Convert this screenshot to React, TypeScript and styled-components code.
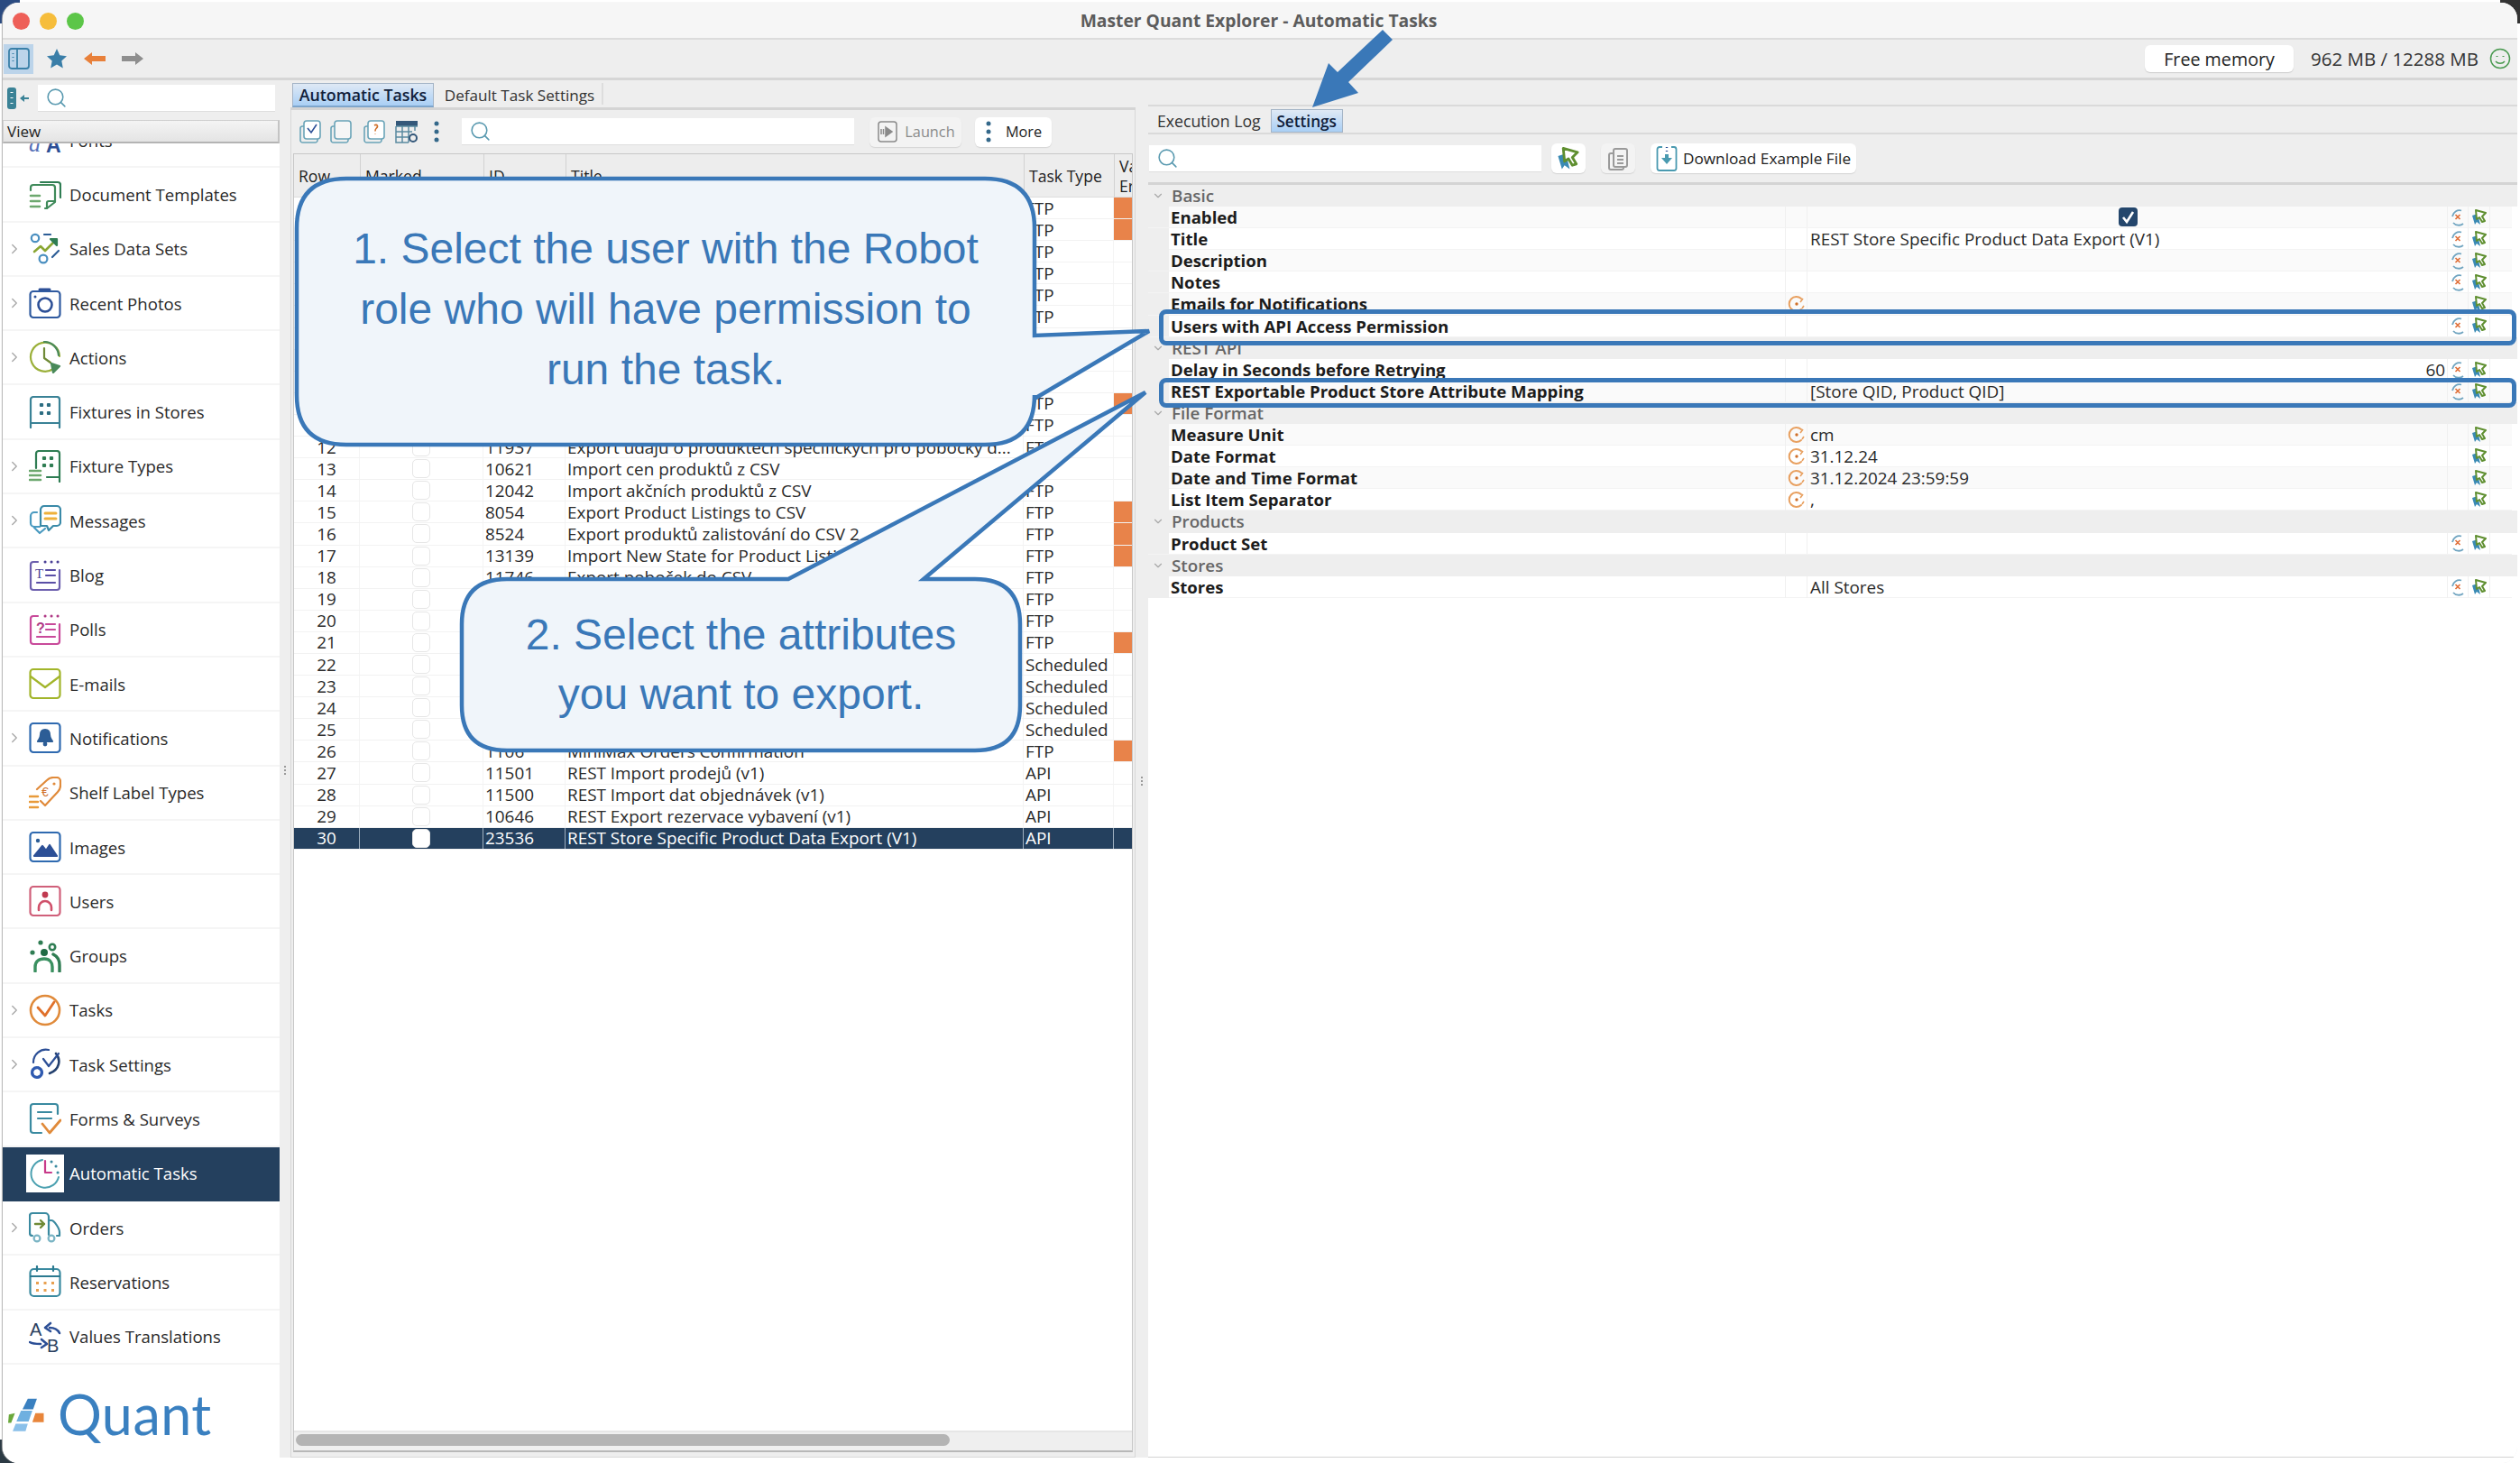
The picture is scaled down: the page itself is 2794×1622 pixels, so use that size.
import React from 'react'
import styled, { createGlobalStyle } from 'styled-components'
import { ChevronRight, ChevronDown, Search } from 'lucide-react'

const BLUE = '#3a78b8'
const UI_FONT = '"Open Sans", "Noto Sans", sans-serif'

const GlobalStyle = createGlobalStyle`
  html, body { margin: 0; padding: 0; background: #fff; }
  * { box-sizing: border-box; }
`

/* ---------- sidebar icons ---------- */

const Svg = ({ children }: { children: React.ReactNode }) => (
  <svg width='36' height='36' viewBox='0 0 36 36' fill='none' strokeWidth='2.2' strokeLinecap='round' strokeLinejoin='round'>
    {children}
  </svg>
)

const icons: Record<string, React.ReactNode> = {
  fonts: (
    <Svg>
      <text x='0' y='31' fontFamily='"Liberation Serif", serif' fontStyle='italic' fontSize='26' fill='#5570b8'>a</text>
      <text x='19' y='32' fontFamily='"Liberation Sans", sans-serif' fontWeight='700' fontSize='23' fill='#2c4f96'>A</text>
    </Svg>
  ),
  doc: (
    <Svg>
      <path d='M13 5h19a3 3 0 0 1 3 3v14' stroke='#2f7d53' />
      <path d='M2 14v-3a3 3 0 0 1 3-3h21a3 3 0 0 1 3 3v16l-9 7h-2' stroke='#3f8a5a' />
      <path d='M2 20h10M2 26h10M2 32h10' stroke='#6ca86e' strokeWidth='2.6' />
      <path d='M20 34v-6a2 2 0 0 1 2-2h6' stroke='#3f8a5a' />
    </Svg>
  ),
  sales: (
    <Svg>
      <circle cx='7' cy='6' r='4.2' stroke='#4a8fc0' />
      <circle cx='16' cy='29' r='4.4' stroke='#4a8fc0' />
      <path d='M17 2h7M26 27l7-7' stroke='#2c5d96' />
      <path d='M6 21l7-6 5 5 11-11' stroke='#8aa632' strokeWidth='2.6' />
      <path d='M24 7h7v7z' fill='#2f7d53' stroke='#2f7d53' />
    </Svg>
  ),
  camera: (
    <Svg>
      <path d='M12 3h11' stroke='#2c4f96' strokeWidth='3' />
      <rect x='1.5' y='5' width='33' height='29' rx='3.5' stroke='#2f5aa0' />
      <circle cx='18' cy='20' r='7.5' stroke='#2c4f96' strokeWidth='2.6' />
      <circle cx='7' cy='11' r='1.5' fill='#2c4f96' stroke='none' />
    </Svg>
  ),
  actions: (
    <Svg>
      <path d='M27 31a16 16 0 1 1 7-14' stroke='#9bb03a' />
      <path d='M17 8v11l7 5' stroke='#6f8a36' />
      <path d='M17 1a16 16 0 0 1 16 15' stroke='#4a8a5a' />
      <path d='M25 25l9 3-7 7z' fill='#4a8a5a' stroke='#4a8a5a' />
    </Svg>
  ),
  fixtures: (
    <Svg>
      <path d='M2 35V4a3 3 0 0 1 3-3h26a3 3 0 0 1 3 3v31M2 30h32' stroke='#3a8296' />
      <path d='M13 9h2v2h-2zM21 9h2v2h-2zM13 18h2v2h-2zM21 18h2v2h-2z' fill='#2c6d82' stroke='#2c6d82' />
    </Svg>
  ),
  fixtureTypes: (
    <Svg>
      <path d='M8 20V4a3 3 0 0 1 3-3h20a3 3 0 0 1 3 3v31M20 30h14' stroke='#2f7d53' />
      <path d='M16 8h2v2h-2zM24 8h2v2h-2zM16 16h2v2h-2zM24 16h2v2h-2z' fill='#2f7d53' stroke='#2f7d53' />
      <path d='M1 23h12M1 28h12M1 33h12' stroke='#6ca86e' strokeWidth='2.6' />
    </Svg>
  ),
  messages: (
    <Svg>
      <path d='M12 25H6a4 4 0 0 1-4-4v-8a4 4 0 0 1 4-4h3' stroke='#4a9ac0' />
      <path d='M6 26l6 6 6-5' stroke='#4a9ac0' />
      <path d='M13 24V6a4 4 0 0 1 4-4h14a4 4 0 0 1 4 4v14a4 4 0 0 1-4 4h-4l-5 5-2-5z' stroke='#3a8aa8' />
      <path d='M18 10h12M18 16h12' stroke='#eeb03a' strokeWidth='3' />
    </Svg>
  ),
  blog: (
    <Svg>
      <path d='M34 12v19a3 3 0 0 1-3 3H5a3 3 0 0 1-3-3V6a3 3 0 0 1 3-3h5' stroke='#6c5fae' />
      <path d='M18 3h.1M25 3h.1M32 3h.1' stroke='#4a3f96' strokeWidth='3' />
      <text x='7' y='21' fontFamily='"Liberation Serif", serif' fontSize='15' fill='#4a3f96'>T</text>
      <path d='M19 12h10M19 18h10M9 26h20' stroke='#5a4fa6' />
    </Svg>
  ),
  polls: (
    <Svg>
      <path d='M34 12v19a3 3 0 0 1-3 3H5a3 3 0 0 1-3-3V6a3 3 0 0 1 3-3h5' stroke='#c84a9a' />
      <path d='M18 3h.1M25 3h.1M32 3h.1' stroke='#b03a86' strokeWidth='3' />
      <text x='8' y='22' fontFamily='"Liberation Sans", sans-serif' fontWeight='700' fontSize='16' fill='#b03a86'>?</text>
      <path d='M19 12h10M19 18h10M9 26h20' stroke='#c84a9a' />
    </Svg>
  ),
  mail: (
    <Svg>
      <rect x='1.5' y='2' width='33' height='32' rx='3.5' stroke='#a2b52a' />
      <path d='M2 10l16 12 16-12' stroke='#a2b52a' />
    </Svg>
  ),
  bell: (
    <Svg>
      <rect x='1.5' y='2' width='33' height='32' rx='3.5' stroke='#2f6ab0' />
      <path d='M18 9c-4 0-5 3-5 6 0 4-2 5-3 7h16c-1-2-3-3-3-7 0-3-1-6-5-6z' fill='#2c5d96' stroke='#2c5d96' />
      <circle cx='18' cy='25' r='2.4' fill='#2c5d96' stroke='none' />
    </Svg>
  ),
  label: (
    <Svg>
      <path d='M9 14L20 4c2-2 4-3 7-3h4a4 4 0 0 1 4 4v5c0 3-1 5-3 7L18 32l-5-5' stroke='#e08a3a' />
      <circle cx='28' cy='8' r='1.6' fill='#e08a3a' stroke='none' />
      <text x='14' y='22' fontFamily='"Liberation Sans", sans-serif' fontSize='14' fill='#d0702a'>€</text>
      <path d='M1 22h9M1 28h9M1 34h9' stroke='#e89a3a' strokeWidth='2.6' />
    </Svg>
  ),
  images: (
    <Svg>
      <rect x='1.5' y='2' width='33' height='32' rx='3.5' stroke='#2f6ab0' />
      <circle cx='10' cy='11' r='2.2' fill='#2c5d96' stroke='none' />
      <path d='M6 28l9-11 4 5 4-6 8 12z' fill='#2c4f96' stroke='#2c4f96' />
    </Svg>
  ),
  users: (
    <Svg>
      <rect x='1.5' y='2' width='33' height='32' rx='3.5' stroke='#d0607a' />
      <circle cx='18' cy='11' r='3.4' fill='#c03a50' stroke='none' />
      <path d='M11 28v-3a7 7 0 0 1 14 0v3' stroke='#d0506a' strokeWidth='2.6' />
    </Svg>
  ),
  groups: (
    <Svg>
      <circle cx='13' cy='3' r='2.6' fill='#2f7d53' stroke='none' />
      <circle cx='4' cy='14' r='2.6' fill='#2f7d53' stroke='none' />
      <circle cx='17' cy='14' r='4' fill='#1f6a43' stroke='none' />
      <circle cx='26' cy='8' r='3.2' stroke='#2f7d53' strokeWidth='2.6' />
      <path d='M7 35v-5c0-6 4-9 10-9s9 4 9 9v5' stroke='#3a9060' strokeWidth='3.4' />
      <path d='M27 16c4 2 7 6 7 12v7' stroke='#2f7d53' strokeWidth='3.4' />
    </Svg>
  ),
  tasks: (
    <Svg>
      <circle cx='18' cy='18' r='16' stroke='#e08a3a' strokeWidth='2.6' />
      <path d='M10 15l8 9 10-15' stroke='#e0702a' strokeWidth='2.8' />
    </Svg>
  ),
  taskSettings: (
    <Svg>
      <path d='M5 16A14 14 0 0 1 22 2' stroke='#2c4f96' />
      <path d='M30 6c6 7 4 18-7 22' stroke='#24406e' strokeWidth='2.6' />
      <path d='M16 12l6 8 11-14' stroke='#2c4f96' />
      <circle cx='9' cy='27' r='5.4' stroke='#2f5ab0' strokeWidth='3.4' strokeDasharray='3 1.4' />
    </Svg>
  ),
  forms: (
    <Svg>
      <path d='M32 13V5a3 3 0 0 0-3-3H5a3 3 0 0 0-3 3v26a3 3 0 0 0 3 3h9' stroke='#3a8aa0' />
      <path d='M10 11h15M10 18h15' stroke='#3a8aa0' />
      <path d='M15 24l8 10 12-14' stroke='#e08a3a' strokeWidth='2.8' />
    </Svg>
  ),
  automatic: (
    <Svg>
      <path d='M15 3A15.5 15.5 0 1 0 33 22' stroke='#4aa0b0' strokeWidth='2' />
      <path d='M18 4v13h7' stroke='#c83a8a' />
      <path d='M25 5h.1M30 10h.1M32 17h.1' stroke='#3a8aa0' strokeWidth='3' />
    </Svg>
  ),
  orders: (
    <Svg>
      <path d='M4 27a3 3 0 0 1-3-3V5a3 3 0 0 1 3-3h14a4 4 0 0 1 4 4v20' stroke='#3a8aa0' />
      <path d='M22 10h3c3 0 9 9 9 13v4h-3' stroke='#3a8aa0' />
      <circle cx='9' cy='30' r='3.4' stroke='#7ab4c4' />
      <circle cx='25' cy='30' r='3.4' stroke='#7ab4c4' />
      <path d='M7 14h10M13 10l4 4-4 4' stroke='#6f8a36' strokeWidth='2.4' />
    </Svg>
  ),
  calendar: (
    <Svg>
      <rect x='1.5' y='4' width='33' height='30' rx='4' stroke='#3a8aa0' />
      <path d='M2 12h32M9 1v5M27 1v5' stroke='#2c7a90' />
      <path d='M8 18h3v3H8zM16.5 18h3v3h-3zM25 18h3v3h-3zM8 26h3v3H8zM16.5 26h3v3h-3zM25 26h3v3h-3z' fill='#e8a050' stroke='none' />
    </Svg>
  ),
  translate: (
    <Svg>
      <text x='1' y='17' fontFamily='"Liberation Sans", sans-serif' fontSize='20' fill='#2a3f60'>A</text>
      <text x='20' y='35' fontFamily='"Liberation Sans", sans-serif' fontSize='20' fill='#2a3f60'>B</text>
      <path d='M34 14c-2-4-6-6-11-6M24 3l-6 5 6 4' stroke='#2c4f96' strokeWidth='2.6' />
      <path d='M1 24c3 2 6 2 12 2M14 21l6 5-6 4' stroke='#2c4f96' strokeWidth='2.6' />
    </Svg>
  )
}

type NavItem = { key: string; label: string; expandable?: boolean; active?: boolean }

const navItems: NavItem[] = [
  { key: 'fonts', label: 'Fonts' },
  { key: 'doc', label: 'Document Templates' },
  { key: 'sales', label: 'Sales Data Sets', expandable: true },
  { key: 'camera', label: 'Recent Photos', expandable: true },
  { key: 'actions', label: 'Actions', expandable: true },
  { key: 'fixtures', label: 'Fixtures in Stores' },
  { key: 'fixtureTypes', label: 'Fixture Types', expandable: true },
  { key: 'messages', label: 'Messages', expandable: true },
  { key: 'blog', label: 'Blog' },
  { key: 'polls', label: 'Polls' },
  { key: 'mail', label: 'E-mails' },
  { key: 'bell', label: 'Notifications', expandable: true },
  { key: 'label', label: 'Shelf Label Types' },
  { key: 'images', label: 'Images' },
  { key: 'users', label: 'Users' },
  { key: 'groups', label: 'Groups' },
  { key: 'tasks', label: 'Tasks', expandable: true },
  { key: 'taskSettings', label: 'Task Settings', expandable: true },
  { key: 'forms', label: 'Forms & Surveys' },
  { key: 'automatic', label: 'Automatic Tasks', active: true },
  { key: 'orders', label: 'Orders', expandable: true },
  { key: 'calendar', label: 'Reservations' },
  { key: 'translate', label: 'Values Translations' }
]

/* ---------- data ---------- */

type TaskRow = { id?: string; title?: string; type?: string; flagged?: boolean }

const taskRows: TaskRow[] = [
  { type: 'FTP', flagged: true },
  { type: 'FTP', flagged: true },
  { type: 'FTP' },
  { type: 'FTP' },
  { type: 'FTP' },
  { type: 'FTP' },
  {},
  {},
  {},
  { type: 'FTP', flagged: true },
  { type: 'FTP' },
  { id: '11937', title: 'Export údajů o produktech specifických pro pobočky d...', type: 'FTP' },
  { id: '10621', title: 'Import cen produktů z CSV' },
  { id: '12042', title: 'Import akčních produktů z CSV', type: 'FTP' },
  { id: '8054', title: 'Export Product Listings to CSV', type: 'FTP', flagged: true },
  { id: '8524', title: 'Export produktů zalistování do CSV 2', type: 'FTP', flagged: true },
  { id: '13139', title: 'Import New State for Product Listings', type: 'FTP', flagged: true },
  { id: '11746', title: 'Export poboček do CSV', type: 'FTP' },
  { type: 'FTP' },
  { type: 'FTP' },
  { type: 'FTP', flagged: true },
  { type: 'Scheduled' },
  { type: 'Scheduled' },
  { type: 'Scheduled' },
  { type: 'Scheduled' },
  { id: '1106', title: 'MiniMax Orders Confirmation', type: 'FTP', flagged: true },
  { id: '11501', title: 'REST Import prodejů (v1)', type: 'API' },
  { id: '11500', title: 'REST Import dat objednávek (v1)', type: 'API' },
  { id: '10646', title: 'REST Export rezervace vybavení (v1)', type: 'API' },
  { id: '23536', title: 'REST Store Specific Product Data Export (V1)', type: 'API' }
]

type PropRow = {
  label: string
  group?: boolean
  value?: string
  alignEnd?: boolean
  inherited?: boolean
  reset?: boolean
  checked?: boolean
}

const propRows: PropRow[] = [
  { label: 'Basic', group: true },
  { label: 'Enabled', checked: true, reset: true },
  { label: 'Title', value: 'REST Store Specific Product Data Export (V1)', reset: true },
  { label: 'Description', reset: true },
  { label: 'Notes', reset: true },
  { label: 'Emails for Notifications', inherited: true },
  { label: 'Users with API Access Permission', reset: true },
  { label: 'REST API', group: true },
  { label: 'Delay in Seconds before Retrying', value: '60', alignEnd: true, reset: true },
  { label: 'REST Exportable Product Store Attribute Mapping', value: '[Store QID, Product QID]', reset: true },
  { label: 'File Format', group: true },
  { label: 'Measure Unit', value: 'cm', inherited: true },
  { label: 'Date Format', value: '31.12.24', inherited: true },
  { label: 'Date and Time Format', value: '31.12.2024 23:59:59', inherited: true },
  { label: 'List Item Separator', value: ',', inherited: true },
  { label: 'Products', group: true },
  { label: 'Product Set', reset: true },
  { label: 'Stores', group: true },
  { label: 'Stores', value: 'All Stores', reset: true }
]

/* ---------- small drawings ---------- */

const PinIcon = ({ size = 18 }: { size?: number }) => (
  <svg width={size} height={size} viewBox='0 0 18 18'>
    <path d='M1 7l6-2 3 12-4-3-2 3z' fill='#3a8ab4' />
    <path d='M5 1l11 3-4 4 3 5-3 1-3-5-3 2z' fill='#fff' stroke='#5f8f30' strokeWidth='2' strokeLinejoin='round' />
  </svg>
)

const ResetIcon = () => (
  <svg width='18' height='22' viewBox='0 0 18 22' fill='none'>
    <path d='M13 3.500A8 8 0 0 0 3 10' stroke='#6fa4c0' strokeWidth='1.800' />
    <path d='M4 17a8 8 0 0 0 11 1' stroke='#6fa4c0' strokeWidth='1.800' />
    <path d='M6.500 8l5 5M11.500 8l-5 5' stroke='#e0703a' strokeWidth='1.700' />
  </svg>
)

const InheritedIcon = () => (
  <svg width='20' height='22' viewBox='0 0 20 22' fill='none'>
    <path d='M15 5a8 8 0 1 0 0 12' stroke='#e8a060' strokeWidth='2' strokeLinecap='round' />
    <path d='M14 9l3-4M16 16l2-3' stroke='#e8a060' strokeWidth='1.600' />
    <circle cx='10' cy='11' r='1.700' fill='#d0702a' />
  </svg>
)

const TabletIcon = ({ mark }: { mark: 'check' | 'none' | 'help' }) => (
  <svg width='26' height='28' viewBox='0 0 26 28' fill='none' stroke='#6aa4b8' strokeWidth='1.600'>
    <rect x='6' y='2' width='18' height='20' rx='3' fill={mark === 'none' ? '#f6f6f6' : '#fff'} />
    <path d='M6 8H4a2.500 2.500 0 0 0-2 2.500v13A2.500 2.500 0 0 0 4.500 26h14a2.500 2.500 0 0 0 2.500-2.500V22' />
    {mark === 'check' && <path d='M10 10l4 5 6-9' stroke='#2c4f96' />}
    {mark === 'help' && <path d='M13 7c3-2 5 1 2 3.500-1 .8-1 1.500-1 3M14 16.500v.5' stroke='#d0702a' />}
  </svg>
)

const TableIcon = () => (
  <svg width='26' height='28' viewBox='0 0 26 28' fill='none'>
    <rect x='1' y='2' width='24' height='6' fill='#34587a' />
    <path d='M1 8h24M1 14h18M1 20h14M8 8v18M15 8v18M1 8v18h14M22 8v5' stroke='#5a8aa0' strokeWidth='1.500' />
    <circle cx='20' cy='21' r='4' stroke='#34587a' strokeWidth='2' />
  </svg>
)

const Kebab = ({ color }: { color: string }) => (
  <svg width='8' height='26' viewBox='0 0 8 26'>
    <circle cx='4' cy='4' r='2.500' fill={color} />
    <circle cx='4' cy='13' r='2.500' fill={color} />
    <circle cx='4' cy='22' r='2.500' fill={color} />
  </svg>
)

/* ---------- layout ---------- */

const Page = styled.div`
  position: relative;
  width: 2794px;
  height: 1622px;
  overflow: hidden;
  background: #fff;
  font-family: ${UI_FONT};
  color: #222;
`
const Corner = styled.div<{ $left?: number; $right?: number; $top?: number; $bottom?: number; $color: string }>`
  position: absolute;
  width: 22px;
  height: 26px;
  ${(p) => (p.$left !== undefined ? `left: ${p.$left}px;` : '')}
  ${(p) => (p.$right !== undefined ? `right: ${p.$right}px;` : '')}
  ${(p) => (p.$top !== undefined ? `top: ${p.$top}px;` : '')}
  ${(p) => (p.$bottom !== undefined ? `bottom: ${p.$bottom}px;` : '')}
  background: ${(p) => p.$color};
`
const Window = styled.div`
  position: relative;
  display: flex;
  flex-direction: column;
  height: 1619px;
  margin: 3px 3px 0 3px;
  background: #fff;
  border-radius: 18px;
  overflow: hidden;
  box-shadow: -1px 0 1px #b4b4b4;
`
const TitleBar = styled.div`
  position: relative;
  display: flex;
  flex: 0 0 41px;
  align-items: center;
  justify-content: center;
  background: #f6f6f6;
  border-bottom: 2px solid #dcdcdc;
`
const Lights = styled.div`
  position: absolute;
  left: 11px;
  top: 11px;
  display: flex;
  gap: 11px;
`
const Light = styled.span<{ $color: string }>`
  width: 19px;
  height: 19px;
  border-radius: 50%;
  background: ${(p) => p.$color};
`
const WindowTitle = styled.div`
  font-size: 19.300px;
  font-weight: 700;
  color: #5c5c5c;
  margin-right: 3px;
`
const ToolBar = styled.div`
  display: flex;
  flex: 0 0 45px;
  align-items: center;
  justify-content: space-between;
  padding: 0 7px 0 1px;
  background: #eee;
  border-bottom: 3px solid #d6d6d6;
`
const ToolGroup = styled.div`
  display: flex;
  align-items: center;
`
const ToggleButton = styled.div`
  display: flex;
  align-items: center;
  justify-content: center;
  width: 33px;
  height: 33px;
  background: #bcd4ea;
  margin-right: 14px;
`
const ToolIcon = styled.div`
  display: flex;
  margin-right: 18px;
`
const MemoryButton = styled.div`
  display: flex;
  align-items: center;
  justify-content: center;
  width: 165px;
  height: 30px;
  background: #fff;
  border-radius: 6px;
  box-shadow: 0 1px 1px #ccc;
  font-size: 19.700px;
  margin-right: 19px;
`
const MemoryText = styled.div`
  font-size: 20.500px;
  margin-right: 12px;
  color: #333;
`
const Main = styled.div`
  display: flex;
  flex: 1;
  min-height: 0;
  background: #fff;
`

/* sidebar */

const Sidebar = styled.aside`
  display: flex;
  flex: 0 0 307px;
  flex-direction: column;
  background: #fff;
`
const SideSearchRow = styled.div`
  display: flex;
  flex: 0 0 44px;
  align-items: center;
  gap: 10px;
  padding: 0 5px 4px 5px;
  background: #eee;
`
const SearchField = styled.div<{ $width?: number }>`
  display: flex;
  align-items: center;
  flex: ${(p) => (p.$width ? `0 0 ${p.$width}px` : '1')};
  height: 30px;
  padding-left: 8px;
  background: #fff;
  border-bottom: 1px solid #dedede;
  color: #5a9ab0;
`
const ViewHeader = styled.div`
  display: flex;
  flex: 0 0 25px;
  align-items: center;
  padding-left: 4px;
  font-size: 17px;
  background: linear-gradient(#f4f4f4, #e4e4e4);
  border: 1px solid #cfcfcf;
  border-bottom: 2px solid #b4b4b4;
  border-right: 2px solid #c4c4c4;
`
const NavList = styled.div`
  flex: 0 0 1357px;
  overflow: hidden;
`
const NavInner = styled.div`
  margin-top: -33px;
`
const NavRow = styled.div<{ $active?: boolean }>`
  position: relative;
  display: flex;
  align-items: center;
  height: 60.3px;
  padding-left: 29px;
  gap: 9px;
  font-size: 18.600px;
  color: ${(p) => (p.$active ? '#fff' : '#2a2a2a')};
  background: ${(p) => (p.$active ? '#24405e' : '#fff')};
  border-bottom: 2px solid ${(p) => (p.$active ? '#24405e' : '#f5f5f5')};
`
const NavChevron = styled.span`
  position: absolute;
  left: 4px;
  top: 50%;
  margin-top: -9px;
  display: flex;
  color: #a8a8a8;
`
const NavIcon = styled.span<{ $active?: boolean }>`
  display: flex;
  align-items: center;
  justify-content: center;
  width: 36px;
  height: 36px;
  ${(p) => p.$active && 'background: #fff; box-shadow: 0 0 0 3px #fff;'}
`
const LogoArea = styled.div`
  display: flex;
  flex: 1;
  align-items: flex-start;
  gap: 12px;
  padding: 16px 0 0 5px;
`
const LogoWord = styled.div`
  font-family: Lato, "Open Sans", sans-serif;
  font-weight: 400;
  font-size: 61px;
  line-height: 72px;
  color: #3a80c0;
  letter-spacing: 0.5px;
`
const LogoMark = styled.div`
  display: flex;
  padding-top: 17px;
`

/* splitters */

const Splitter = styled.div<{ $width: number; $gripTop: number }>`
  flex: 0 0 ${(p) => p.$width}px;
  padding-top: ${(p) => p.$gripTop}px;
  margin-bottom: 6px;
  display: flex;
  justify-content: center;
  background: #eee;
`
const Grip = styled.div`
  width: 2px;
  height: 10px;
  background: repeating-linear-gradient(#999 0 2px, transparent 2px 4px);
`

/* center panel */

const CenterPanel = styled.section`
  display: flex;
  flex: 0 0 936px;
  flex-direction: column;
  margin-bottom: 6px;
  background: #eee;
`
const TabStrip = styled.div<{ $pad?: number }>`
  display: flex;
  flex: 0 0 33px;
  align-items: flex-end;
  padding-left: ${(p) => p.$pad || 0}px;
  border-bottom: 3px solid #d4d4d4;
`
const Tab = styled.div<{ $selected?: boolean; $width: number }>`
  display: flex;
  align-items: center;
  justify-content: center;
  width: ${(p) => p.$width}px;
  height: 27px;
  padding-left: ${(p) => (p.$selected ? 0 : 4)}px;
  font-size: ${(p) => (p.$selected ? 17.800 : 17.100)}px;
  font-weight: ${(p) => (p.$selected ? 600 : 400)};
  color: ${(p) => (p.$selected ? '#10203a' : '#333')};
  background: ${(p) => (p.$selected ? 'linear-gradient(#dfe9f5, #a9cff5)' : 'transparent')};
  border: ${(p) => (p.$selected ? '1px solid #a4b4c6' : 'none')};
  border-bottom: ${(p) => (p.$selected ? '2px solid #7ea6cc' : 'none')};
`
const TabGap = styled.div`
  height: 24px;
  width: 2px;
  background: #ddd;
  align-self: center;
`
const CenterBody = styled.div`
  display: flex;
  flex: 1;
  flex-direction: column;
  min-height: 0;
  padding: 0 2px 5px;
  border: 1px solid #d8d8d8;
  border-top: none;
`
const PanelToolbar = styled.div`
  display: flex;
  flex: 0 0 48px;
  align-items: center;
  padding-left: 6px;
`
const IconSlot = styled.div<{ $gap: number }>`
  display: flex;
  margin-right: ${(p) => p.$gap}px;
`
const ActionButton = styled.div<{ $disabled?: boolean; $width: number; $gap: number }>`
  display: flex;
  align-items: center;
  justify-content: center;
  gap: ${(p) => p.$gap}px;
  width: ${(p) => p.$width}px;
  height: 33px;
  margin-right: 15px;
  font-size: 16.300px;
  color: ${(p) => (p.$disabled ? '#8a8a8a' : '#222')};
  background: ${(p) => (p.$disabled ? '#f3f3f3' : '#fff')};
  border-radius: 6px;
  box-shadow: 0 1px 1px #d4d4d4;
`
const TableBox = styled.div`
  display: flex;
  flex: 1;
  flex-direction: column;
  min-height: 0;
  background: #fff;
  border: 1px solid #c8c8c8;
  border-bottom: 2px solid #b8b8b8;
`
const gridColumns = '73px 137px 91px 508px 100px 20px'
const HeaderRow = styled.div`
  display: grid;
  flex: 0 0 48px;
  grid-template-columns: ${gridColumns};
  background: #ededed;
  border-bottom: 1px solid #ddd;
`
const HeaderCell = styled.div`
  display: flex;
  align-items: center;
  padding-left: 5px;
  font-size: 17.600px;
  line-height: 22px;
  overflow: hidden;
  border-left: 1px solid #d2d2d2;
  &:first-child { border-left: none; }
`
const Rows = styled.div`
  flex: 1;
`
const Row = styled.div<{ $selected?: boolean }>`
  display: grid;
  height: 24.1px;
  grid-template-columns: ${gridColumns};
  font-size: 18.900px;
  line-height: 24px;
  white-space: nowrap;
  color: ${(p) => (p.$selected ? '#fff' : '#2a2a2a')};
  background: ${(p) => (p.$selected ? '#24405e' : '#fff')};
  border-bottom: 1px solid #f2f2f2;
`
const Cell = styled.div<{ $center?: boolean; $selected?: boolean; $pad?: number }>`
  display: flex;
  align-items: center;
  justify-content: ${(p) => (p.$center ? 'center' : 'flex-start')};
  padding-left: ${(p) => p.$pad ?? 2}px;
  overflow: hidden;
  border-right: 1px solid ${(p) => (p.$selected ? '#9fb0c0' : '#f4f4f4')};
`
const Flag = styled.div<{ $on?: boolean }>`
  background: ${(p) => (p.$on ? '#e8834a' : 'transparent')};
`
const RowCheck = styled.span`
  width: 20px;
  height: 21px;
  border-radius: 5px;
  background: #fff;
  border: 1px solid #e6e6e6;
`
const ScrollTrack = styled.div`
  display: flex;
  flex: 0 0 22px;
  align-items: center;
  padding: 0 0 3px 2px;
  background: #efefef;
  border-top: 2px solid #e6e6e6;
`
const ScrollThumb = styled.div`
  width: 725px;
  height: 13px;
  border-radius: 7px;
  background: #b4b4b4;
`

/* right panel */

const RightPanel = styled.section`
  display: flex;
  flex: 0 0 1518px;
  flex-direction: column;
  margin-bottom: 6px;
  background: #eee;
  border-bottom: 1px solid #d4d4d4;
`
const RightTopBand = styled.div`
  flex: 0 0 29px;
  border-bottom: 2px solid #dadada;
`
const RightTabs = styled.div`
  display: flex;
  flex: 0 0 31px;
  align-items: flex-end;
  padding-left: 5px;
  gap: 6px;
  border-bottom: 2px solid #dadada;
`
const RightTab = styled.div<{ $selected?: boolean }>`
  display: flex;
  align-items: center;
  justify-content: center;
  height: 26px;
  padding: 0 5px;
  font-size: ${(p) => (p.$selected ? 17.200 : 17.700)}px;
  font-weight: ${(p) => (p.$selected ? 600 : 400)};
  color: ${(p) => (p.$selected ? '#10203a' : '#333')};
  width: ${(p) => (p.$selected ? '80px' : 'auto')};
  background: ${(p) => (p.$selected ? 'linear-gradient(#dfe9f5, #a9cff5)' : 'transparent')};
  border: ${(p) => (p.$selected ? '1px solid #a4b4c6' : 'none')};
`
const RightToolbar = styled.div`
  display: flex;
  flex: 0 0 56px;
  align-items: center;
  padding: 0 0 0 1px;
  border-bottom: 3px solid #d4d4d4;
`
const IconButton = styled.div<{ $muted?: boolean; $width?: number }>`
  display: flex;
  align-items: center;
  justify-content: center;
  gap: 6px;
  width: ${(p) => p.$width || 38}px;
  height: 33px;
  margin-right: 17px;
  font-size: 17.200px;
  white-space: nowrap;
  background: ${(p) => (p.$muted ? '#f3f3f3' : '#fff')};
  border-radius: 6px;
  box-shadow: 0 1px 1px #d4d4d4;
`
const PropGrid = styled.div`
  flex: 1;
  background: #fff;
`
const propColumns = '23px 683px 24px 710px 23px 24px 25px'
const GroupRow = styled.div`
  display: flex;
  align-items: center;
  height: 24.1px;
  background: #eee;
  font-size: 18.800px;
  font-weight: 600;
  color: #666;
  gap: 8px;
  padding-left: 4px;
`
const PropRowBox = styled.div<{ $odd: boolean }>`
  display: grid;
  height: 24.1px;
  grid-template-columns: ${propColumns};
  width: 1512px;
  font-size: 18.900px;
  line-height: 24px;
  white-space: nowrap;
  background: ${(p) => (p.$odd ? '#fafafa' : '#fff')};
  border-bottom: 1px solid #f3f3f3;
`
const Gutter = styled.div`
  background: #eee;
`
const PropLabel = styled.div`
  padding-left: 2px;
  font-weight: 700;
  font-size: 18.600px;
  color: #1c1c1c;
  overflow: hidden;
`
const PropIconCell = styled.div`
  display: flex;
  align-items: center;
  justify-content: center;
  overflow: hidden;
  border-left: 1px solid #f0f0f0;
`
const PropValue = styled.div<{ $end?: boolean; $center?: boolean }>`
  display: flex;
  align-items: center;
  justify-content: ${(p) => (p.$end ? 'flex-end' : p.$center ? 'center' : 'flex-start')};
  padding: 0 2px 0 3px;
  border-left: 1px solid #f0f0f0;
  color: #2a2a2a;
`
const CheckBox = styled.span`
  display: flex;
  align-items: center;
  justify-content: center;
  width: 21px;
  height: 21px;
  border-radius: 4px;
  background: #24466c;
`

/* annotations lying over the screenshot */

const AnnotationLayer = styled.svg`
  position: absolute;
  left: 0;
  top: 0;
  pointer-events: none;
`
const CalloutText = styled.div<{ $left: number; $top: number; $width: number; $line: number }>`
  position: absolute;
  left: ${(p) => p.$left}px;
  top: ${(p) => p.$top}px;
  width: ${(p) => p.$width}px;
  font-family: "Liberation Sans", Arial, sans-serif;
  font-size: 48px;
  line-height: ${(p) => p.$line}px;
  color: ${BLUE};
  text-align: center;
`
const Highlight = styled.div<{ $top: number; $height: number }>`
  position: absolute;
  left: 1285px;
  top: ${(p) => p.$top}px;
  width: 1505px;
  height: ${(p) => p.$height}px;
  border: 5px solid ${BLUE};
  border-radius: 8px;
`

const QuantMark = () => (
  <svg width='44' height='42' viewBox='0 0 52 50'>
    <path d='M2 23l8-2-5 13H1z' fill='#6aa83c' />
    <path d='M27 2h12l-5 14H20z' fill='#3a80c0' />
    <path d='M18 18h15l-5 14H12z' fill='#6fb0e0' />
    <path d='M37 21h11v12H33z' fill='#e8853a' />
    <path d='M11 35h16l-3 10H7z' fill='#8ac0ea' />
  </svg>
)

export default function App() {
  return (
    <Page>
      <GlobalStyle />
      <Corner $left={0} $top={0} $color='#2a4a80' />
      <Corner $right={0} $top={0} $color='#333' />
      <Corner $left={0} $bottom={0} $color='#2c3a44' />
      <Window>
        <TitleBar>
          <Lights>
            <Light $color='#ee5f58' />
            <Light $color='#f6bd3b' />
            <Light $color='#5cc648' />
          </Lights>
          <WindowTitle>Master Quant Explorer - Automatic Tasks</WindowTitle>
        </TitleBar>

        <ToolBar>
          <ToolGroup>
            <ToggleButton>
              <svg width='24' height='24' viewBox='0 0 24 24' fill='none' stroke='#3a80a8' strokeWidth='1.800'>
                <rect x='1' y='1' width='22' height='22' rx='3' />
                <path d='M10 1v22' />
                <path d='M5.500 6v1M5.500 10v1M5.500 14v1' strokeWidth='2' />
              </svg>
            </ToggleButton>
            <ToolIcon>
              <svg width='24' height='24' viewBox='0 0 24 24'>
                <path d='M12 1l3.300 7.300 7.700.9-5.700 5.300 1.500 7.900L12 18.500 5.200 22.400l1.500-7.900L1 9.200l7.700-.9z' fill='#3a7ea8' />
              </svg>
            </ToolIcon>
            <ToolIcon>
              <svg width='24' height='16' viewBox='0 0 24 16'>
                <path d='M0 8l9-7v4h15v6H9v4z' fill='#e8803a' />
              </svg>
            </ToolIcon>
            <ToolIcon>
              <svg width='24' height='16' viewBox='0 0 24 16'>
                <path d='M24 8l-9-7v4H0v6h15v4z' fill='#8e8e8e' />
              </svg>
            </ToolIcon>
          </ToolGroup>
          <ToolGroup>
            <MemoryButton>Free memory</MemoryButton>
            <MemoryText>962 MB / 12288 MB</MemoryText>
            <svg width='24' height='24' viewBox='0 0 24 24' fill='none' stroke='#4a9a50' strokeWidth='1.500'>
              <circle cx='12' cy='12' r='10.500' />
              <path d='M8.500 9v1M15.500 9v1' strokeWidth='2' />
              <path d='M7 15c2.500 3 7.500 3 10 0' />
            </svg>
          </ToolGroup>
        </ToolBar>

        <Main>
          <Sidebar>
            <SideSearchRow>
              <svg width='24' height='28' viewBox='0 0 24 28'>
                <rect x='0' y='2' width='10' height='24' rx='3' fill='#3a8296' />
                <path d='M5 7v1M5 13v1M5 19v1' stroke='#fff' strokeWidth='3' />
                <path d='M14 14l5-4v3h5v2h-5v3z' fill='#3a8296' />
              </svg>
              <SearchField>
                <Search size={25} strokeWidth={1.500} />
              </SearchField>
            </SideSearchRow>
            <ViewHeader>View</ViewHeader>
            <NavList>
              <NavInner>
                {navItems.map((item) => (
                  <NavRow key={item.key} $active={item.active}>
                    {item.expandable && (
                      <NavChevron>
                        <ChevronRight size={18} strokeWidth={1.800} />
                      </NavChevron>
                    )}
                    <NavIcon $active={item.active}>{icons[item.key]}</NavIcon>
                    {item.label}
                  </NavRow>
                ))}
              </NavInner>
            </NavList>
            <LogoArea>
              <LogoMark>
                <QuantMark />
              </LogoMark>
              <LogoWord>Quant</LogoWord>
            </LogoArea>
          </Sidebar>

          <Splitter $width={12} $gripTop={760}>
            <Grip />
          </Splitter>

          <CenterPanel>
            <TabStrip $pad={2}>
              <Tab $selected $width={157}>Automatic Tasks</Tab>
              <Tab $width={186}>Default Task Settings</Tab>
              <TabGap />
            </TabStrip>
            <CenterBody>
              <PanelToolbar>
                <IconSlot $gap={8}><TabletIcon mark='check' /></IconSlot>
                <IconSlot $gap={11}><TabletIcon mark='none' /></IconSlot>
                <IconSlot $gap={10}><TabletIcon mark='help' /></IconSlot>
                <IconSlot $gap={16}><TableIcon /></IconSlot>
                <IconSlot $gap={24}><Kebab color='#34688a' /></IconSlot>
                <SearchField $width={435}>
                  <Search size={25} strokeWidth={1.500} />
                </SearchField>
                <IconSlot $gap={17} />
                <ActionButton $disabled $width={102} $gap={6}>
                  <svg width='26' height='26' viewBox='0 0 26 26' fill='none' stroke='#8a8a8a' strokeWidth='1.500'>
                    <rect x='3' y='2' width='20' height='22' rx='3' />
                    <path d='M11 8l7 5-7 5z' fill='#8a8a8a' />
                    <path d='M6 10v6M8.500 10v6' />
                  </svg>
                  Launch
                </ActionButton>
                <ActionButton $width={85} $gap={15}>
                  <Kebab color='#34688a' />
                  <span>More</span>
                </ActionButton>
              </PanelToolbar>
              <TableBox>
                <HeaderRow>
                  <HeaderCell>Row</HeaderCell>
                  <HeaderCell>Marked</HeaderCell>
                  <HeaderCell>ID</HeaderCell>
                  <HeaderCell>Title</HeaderCell>
                  <HeaderCell>Task Type</HeaderCell>
                  <HeaderCell>Va<br />Er</HeaderCell>
                </HeaderRow>
                <Rows>
                  {taskRows.map((row, index) => {
                    const selected = index === taskRows.length - 1
                    return (
                      <Row key={index} $selected={selected}>
                        <Cell $center $pad={0} $selected={selected}>{index + 1}</Cell>
                        <Cell $center $pad={0} $selected={selected}><RowCheck /></Cell>
                        <Cell $selected={selected}>{row.id}</Cell>
                        <Cell $selected={selected}>{row.title}</Cell>
                        <Cell $selected={selected}>{row.type}</Cell>
                        <Flag $on={row.flagged} />
                      </Row>
                    )
                  })}
                </Rows>
                <ScrollTrack>
                  <ScrollThumb />
                </ScrollTrack>
              </TableBox>
            </CenterBody>
          </CenterPanel>

          <Splitter $width={14} $gripTop={772}>
            <Grip />
          </Splitter>

          <RightPanel>
            <RightTopBand />
            <RightTabs>
              <RightTab>Execution Log</RightTab>
              <RightTab $selected>Settings</RightTab>
            </RightTabs>
            <RightToolbar>
              <SearchField $width={435}>
                <Search size={25} strokeWidth={1.500} />
              </SearchField>
              <IconSlot $gap={11} />
              <IconButton><PinIcon size={26} /></IconButton>
              <IconButton $muted>
                <svg width='24' height='28' viewBox='0 0 24 28' fill='none' stroke='#9a9a9a' strokeWidth='2'>
                  <rect x='7' y='3' width='15' height='20' rx='2' />
                  <path d='M7 8H4a2 2 0 0 0-2 2v14a2 2 0 0 0 2 2h12a2 2 0 0 0 2-2v-1M11 11h7M11 15h7M11 19h7' />
                </svg>
              </IconButton>
              <IconButton $width={228}>
                <svg width='24' height='30' viewBox='0 0 24 30' fill='none' stroke='#4a9ab0' strokeWidth='1.800'>
                  <path d='M7 2H4a2.500 2.500 0 0 0-2.500 2.500v21A2.500 2.500 0 0 0 4 28h16a2.500 2.500 0 0 0 2.500-2.500v-21A2.500 2.500 0 0 0 20 2h-3' />
                  <path d='M12 2v1M12 6v1' stroke='#2c4f96' strokeWidth='2.400' />
                  <path d='M12 21l-6-7h12z' fill='#4a9ab0' stroke='none' />
                  <path d='M10 10h4v5h-4z' fill='#4a9ab0' stroke='none' />
                </svg>
                Download Example File
              </IconButton>
            </RightToolbar>
            <PropGrid>
              {propRows.map((row, index) => {
                if (row.group) {
                  return (
                    <GroupRow key={index}>
                      <ChevronDown size={14} color='#a8a8a8' />
                      {row.label}
                    </GroupRow>
                  )
                }
                return (
                  <PropRowBox key={index} $odd={index % 2 === 1}>
                    <Gutter />
                    <PropLabel>{row.label}</PropLabel>
                    <PropIconCell>{row.inherited && <InheritedIcon />}</PropIconCell>
                    <PropValue $end={row.alignEnd} $center={row.checked}>
                      {row.checked ? (
                        <CheckBox>
                          <svg width='15' height='15' viewBox='0 0 15 15' fill='none' stroke='#fff' strokeWidth='2.600'>
                            <path d='M2 8l4 5 7-11' />
                          </svg>
                        </CheckBox>
                      ) : (
                        row.value
                      )}
                    </PropValue>
                    <PropIconCell>{row.reset && <ResetIcon />}</PropIconCell>
                    <PropIconCell><PinIcon /></PropIconCell>
                    <PropIconCell />
                  </PropRowBox>
                )
              })}
            </PropGrid>
          </RightPanel>
        </Main>
      </Window>

      <Highlight $top={343} $height={40} />
      <Highlight $top={419} $height={33} />

      <AnnotationLayer width='2794' height='1622' viewBox='0 0 2794 1622'>
        <path
          d='M1533 33L1544 44 1495 91 1506 103 1455 119 1473 70 1483 80z'
          fill={BLUE}
        />
        <path
          d='M384 198H1092Q1147 198 1147 253V372L1274 367 1147 442V438Q1147 493 1092 493H384Q329 493 329 438V253Q329 198 384 198z'
          fill='#f0f5fa'
          stroke={BLUE}
          strokeWidth='4.500'
        />
        <path
          d='M562 642H874L1270 435 1024 642H1081Q1131 642 1131 692V782Q1131 832 1081 832H562Q512 832 512 782V692Q512 642 562 642z'
          fill='#f0f5fa'
          stroke={BLUE}
          strokeWidth='4.500'
        />
      </AnnotationLayer>

      <CalloutText $left={329} $top={242} $width={818} $line={67}>
        1. Select the user with the Robot
        <br />
        role who will have permission to
        <br />
        run the task.
      </CalloutText>
      <CalloutText $left={512} $top={671} $width={619} $line={66}>
        2. Select the attributes
        <br />
        you want to export.
      </CalloutText>
    </Page>
  )
}
